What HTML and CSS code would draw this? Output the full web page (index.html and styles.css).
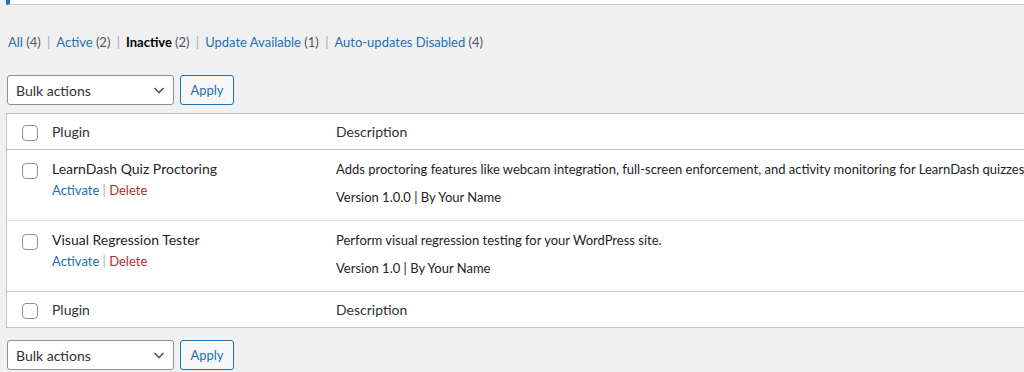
FILE: index.html
```html
<!doctype html>
<html>
    <head>
        <title>Plugins</title>
        <link rel="stylesheet" href="styles.css">
    </head>
    <body>
        <div class="wrap">
            <div class="notice"></div>

            <ul class="subsubsub">
                <li><a href="#">All <span class="count">(4)</span></a> |</li>
                <li><a href="#">Active <span class="count">(2)</span></a> |</li>
                <li><a href="#" class="current">Inactive <span class="count">(2)</span></a> |</li>
                <li><a href="#">Update Available <span class="count">(1)</span></a> |</li>
                <li><a href="#">Auto-updates Disabled <span class="count">(4)</span></a></li>
            </ul>

            <div class="tablenav top">
                <div class="select_box">
                    <span>Bulk actions</span>
                    <svg width="16" height="16" viewBox="0 0 16 16"><path d="M3.5 6 L8 10.5 L12.5 6" fill="none" stroke="#50575e" stroke-width="1.6"/></svg>
                </div>
                <button class="button">Apply</button>
            </div>

            <table class="plugins">
                <thead>
                    <tr>
                        <td class="check_col"><span class="checkbox"></span></td>
                        <th class="name_col">Plugin</th>
                        <th class="desc_col">Description</th>
                    </tr>
                </thead>
                <tbody>
                    <tr>
                        <td class="check_col"><span class="checkbox"></span></td>
                        <td class="name_col">
                            <strong>LearnDash Quiz Proctoring</strong>
                            <div class="row_actions"><a href="#">Activate</a> | <a href="#" class="delete">Delete</a></div>
                        </td>
                        <td class="desc_col">
                            <p>Adds proctoring features like webcam integration, full-screen enforcement, and activity monitoring for LearnDash quizzes.</p>
                            <div class="version">Version 1.0.0 | By Your Name</div>
                        </td>
                    </tr>
                    <tr>
                        <td class="check_col"><span class="checkbox"></span></td>
                        <td class="name_col">
                            <strong>Visual Regression Tester</strong>
                            <div class="row_actions"><a href="#">Activate</a> | <a href="#" class="delete">Delete</a></div>
                        </td>
                        <td class="desc_col">
                            <p>Perform visual regression testing for your WordPress site.</p>
                            <div class="version">Version 1.0 | By Your Name</div>
                        </td>
                    </tr>
                </tbody>
                <tfoot>
                    <tr>
                        <td class="check_col"><span class="checkbox"></span></td>
                        <th class="name_col">Plugin</th>
                        <th class="desc_col">Description</th>
                    </tr>
                </tfoot>
            </table>

            <div class="tablenav bottom">
                <div class="select_box">
                    <span>Bulk actions</span>
                    <svg width="16" height="16" viewBox="0 0 16 16"><path d="M3.5 6 L8 10.5 L12.5 6" fill="none" stroke="#50575e" stroke-width="1.6"/></svg>
                </div>
                <button class="button">Apply</button>
            </div>
        </div>
    </body>
</html>
```

FILE: styles.css
```css
body {
    margin: 0;
    padding: 0;
    background-color: #f0f0f1;
    color: #1d2327;
    font-family: Lato, "Noto Sans", sans-serif;
    font-size: 13px;
    overflow: hidden;
}
.wrap {
    margin-left: 6px;
    width: 1018px;
    overflow: hidden;
}
.notice {
    height: 4px;
    background-color: #fff;
    border-left: 4px solid #2271b1;
    border-bottom: 1px solid #c3c4c7;
}
a {
    color: #2271b1;
    text-decoration: none;
}
.subsubsub {
    list-style: none;
    margin: 26px 0 0 2px;
    padding: 0;
    height: 22px;
    line-height: 22px;
    display: flex;
    color: #a7aaad;
}
.subsubsub li {
    margin-right: 6px;
    white-space: pre;
}
.subsubsub a {
    color: #2271b1;
    padding-right: 3px;
}
.subsubsub .count {
    color: #50575e;
}
.subsubsub a.current {
    color: #000;
    font-weight: 700;
}
.subsubsub a.current .count {
    font-weight: 400;
    color: #50575e;
}
.tablenav {
    display: flex;
    gap: 6px;
    height: 30px;
    margin-left: 1px;
}
.tablenav.top {
    margin-top: 22px;
    margin-bottom: 8px;
}
.tablenav.bottom {
    margin-top: 12px;
}
.select_box {
    box-sizing: border-box;
    width: 167px;
    height: 30px;
    border: 1px solid #8c8f94;
    border-radius: 3px;
    background-color: #fff;
    display: flex;
    align-items: center;
    justify-content: space-between;
    padding: 0 6px 0 8px;
    font-size: 14px;
    color: #2c3338;
}
.button {
    box-sizing: border-box;
    height: 30px;
    width: 54px;
    border: 1px solid #2271b1;
    border-radius: 3px;
    background-color: #f6f7f7;
    color: #2271b1;
    font-family: inherit;
    font-size: 13px;
    padding: 0;
}
.plugins {
    border-collapse: collapse;
    width: 1100px;
    background-color: #fff;
    border: 1px solid #c3c4c7;
    table-layout: fixed;
}
.plugins th, .plugins td {
    text-align: left;
    vertical-align: top;
    padding: 0;
}
.plugins thead th, .plugins tfoot th {
    font-weight: 400;
    font-size: 14px;
    height: 35px;
    vertical-align: middle;
    color: #2c3338;
}
.plugins thead tr {
    border-bottom: 1px solid #c3c4c7;
}
.plugins tfoot tr {
    border-top: 1px solid #c3c4c7;
}
.plugins tbody tr + tr {
    border-top: 1px solid #dcdcde;
}
.check_col {
    width: 45px;
}
.plugins thead .check_col, .plugins tfoot .check_col {
    vertical-align: middle;
}
.checkbox {
    display: block;
    box-sizing: border-box;
    width: 16px;
    height: 16px;
    margin-left: 15px;
    border: 1px solid #8c8f94;
    border-radius: 4px;
    background-color: #fff;
}
.plugins thead .checkbox, .plugins tfoot .checkbox {
    margin-top: 3px;
}
.plugins tbody .check_col .checkbox {
    margin-top: 13px;
}
.name_col {
    width: 284px;
}
.plugins tbody .name_col {
    padding-top: 10px;
    height: 60px;
}
.name_col strong {
    display: block;
    font-weight: 400;
    font-size: 14px;
    line-height: 18px;
}
.row_actions {
    margin-top: 4px;
    font-size: 13px;
    color: #a7aaad;
}
.row_actions a.delete {
    color: #b32d2e;
}
.plugins tbody .desc_col {
    padding-top: 10px;
    font-size: 13px;
    white-space: nowrap;
}
.desc_col p {
    margin: 0;
    line-height: 18px;
}
.version {
    margin-top: 10px;
    line-height: 18px;
}
```
